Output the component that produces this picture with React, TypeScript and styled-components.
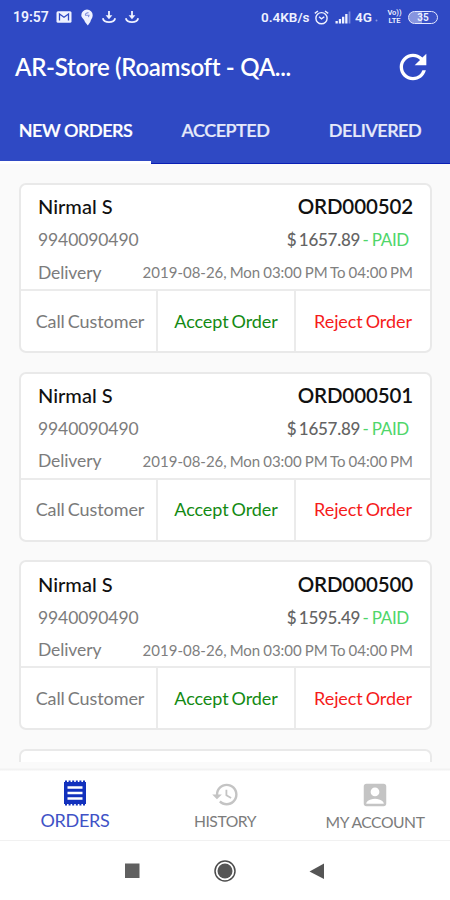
import React from "react";
import styled, { createGlobalStyle } from "styled-components";
import { MdRefresh, MdHistory, MdAccountBox } from "react-icons/md";

const GlobalStyle = createGlobalStyle`
  * { box-sizing: border-box; }
  body { margin: 0; background: #fff; }
  button { border: 0; padding: 0; background: none; font: inherit; color: inherit; }
`;

const Screen = styled.div`
  width: 450px;
  height: 900px;
  display: flex;
  flex-direction: column;
  overflow: hidden;
  background: #fff;
  font-family: Lato, sans-serif;
  white-space: nowrap;
`;

const Header = styled.header`
  height: 164px;
  flex: none;
  background: #2f49c4;
  color: #fff;
  display: flex;
  flex-direction: column;
  border-bottom: 1px solid #0a1fb4;
`;

const StatusBar = styled.div`
  height: 34px;
  display: flex;
  align-items: center;
  justify-content: space-between;
  padding: 0 12px 0 13px;
  color: #eef1ff;
  font-family: Roboto, sans-serif;
  font-weight: 600;
`;

const StatusGroup = styled.div`
  display: flex;
  align-items: center;
`;

const StatusText = styled.span<{ $size: number; $width: number }>`
  font-size: ${(p) => p.$size}px;
  width: ${(p) => p.$width}px;
  line-height: 16px;
`;

const StatusIcon = styled.svg<{ $gap: number }>`
  display: block;
  flex: none;
  margin-left: ${(p) => p.$gap}px;
`;

const Lte = styled.span`
  display: flex;
  flex-direction: column;
  align-items: center;
  width: 15px;
  margin-left: 9px;
  font-size: 7.5px;
  line-height: 8px;
`;

const Battery = styled.span`
  width: 30px;
  height: 13px;
  margin-left: 6px;
  border: 1.5px solid #e4e8ff;
  border-radius: 7px;
  background: linear-gradient(90deg, #8795df 45%, #3a52c8 45%);
  font-size: 10px;
  line-height: 11px;
  text-align: center;
`;

const TitleBar = styled.div`
  height: 66px;
  display: flex;
  align-items: center;
  justify-content: space-between;
  padding: 0 17px 0 15px;
`;

const Title = styled.h1`
  margin: 0;
  font-size: 24px;
  line-height: 30px;
  font-weight: 600;
  letter-spacing: -0.3px;
`;

const Tabs = styled.nav`
  display: grid;
  grid-template-columns: 151px 149px 150px;
  flex: 1;
`;

const Tab = styled.button<{ $active?: boolean }>`
  padding-bottom: ${(p) => (p.$active ? 2 : 3)}px;
  border-bottom: ${(p) => (p.$active ? "3px solid #fff" : "0")};
  margin-bottom: ${(p) => (p.$active ? -1 : 0)}px;
  color: ${(p) => (p.$active ? "#fff" : "#e6e9fa")};
  font-size: 18px;
  font-weight: 600;
  letter-spacing: -0.5px;
  -webkit-text-stroke: 0.2px currentColor;
`;

const OrderList = styled.main`
  height: 598px;
  flex: none;
  overflow: hidden;
  padding: 19px 18px 0 19px;
  background: #fafafa;
  display: flex;
  flex-direction: column;
  gap: 18.7px;
`;

const Card = styled.article`
  height: 170px;
  flex: none;
  border: 2px solid #e9e9e9;
  border-radius: 7px;
  background: #fff;
  display: flex;
  flex-direction: column;
`;

const Details = styled.div`
  height: 106px;
  flex: none;
  padding: 4.7px 17px 0 17px;
  border-bottom: 2px solid #ebebeb;
`;

const Row = styled.div<{ $height: number }>`
  height: ${(p) => p.$height}px;
  display: flex;
  align-items: center;
  justify-content: space-between;
`;

const Customer = styled.span`
  color: #111;
  font-size: 20px;
  font-weight: 500;
`;

const OrderId = styled.span`
  color: #111;
  font-size: 20.5px;
  font-weight: 600;
  letter-spacing: -0.12px;
`;

const Muted = styled.span`
  color: #7c7c7c;
  font-size: 17.5px;
  letter-spacing: -0.1px;
`;

const Amount = styled.span`
  color: #646464;
  font-size: 17px;
  font-weight: 500;
  margin-right: 4px;
  letter-spacing: -0.28px;
  word-spacing: -1.5px;
`;

const Paid = styled.span`
  color: #4fd66a;
  font-weight: 400;
  letter-spacing: -0.3px;
  word-spacing: -1px;
`;

const Slot = styled.span`
  color: #808080;
  font-size: 15px;
  word-spacing: -0.9px;
`;

const Actions = styled.div`
  flex: 1;
  display: grid;
  grid-template-columns: 137px 138px 1fr;
`;

const Action = styled.button<{ $color: string }>`
  color: ${(p) => p.$color};
  font-size: 18px;
  letter-spacing: -0.08px;
  word-spacing: -1.5px;
  padding-bottom: 1px;
  border-right: 2px solid #ebebeb;
  &:first-child { padding-left: 3px; }
  &:last-child { border-right: 0; }
`;

const BottomNav = styled.nav`
  height: 79px;
  flex: none;
  display: grid;
  grid-template-columns: repeat(3, 1fr);
  border-bottom: 1px solid #f1f1f1;
  padding-top: 7px;
  background: linear-gradient(#fafafa 0 6px, #f2f2f2 7px 8px, #fff 9px);
`;

const NavItem = styled.button<{ $active?: boolean }>`
  display: flex;
  flex-direction: column;
  align-items: center;
  padding-top: ${(p) => (p.$active ? 9 : 11)}px;
  gap: 1px;
  color: ${(p) => (p.$active ? "#4052c6" : "#7c7c7c")};
  font-size: ${(p) => (p.$active ? 18 : 15.7)}px;
  letter-spacing: ${(p) => (p.$active ? -0.3 : -0.45)}px;
  line-height: 23px;
  svg { color: ${(p) => (p.$active ? "#1231bd" : "#c4c4c4")}; }
`;

const SystemNav = styled.footer`
  flex: 1;
  display: flex;
  justify-content: center;
  align-items: center;
  gap: 71px;
`;

const Download = ({ gap }: { gap: number }) => (
  <StatusIcon $gap={gap} width="14" height="14" viewBox="0 0 14 14" fill="none" stroke="currentColor" strokeWidth="1.8">
    <path d="M7 1v6M0.8 8.2C2.2 13.4 11.8 13.4 13.2 8.2" />
    <path d="M3.6 5.3h6.8L7 9.3z" fill="currentColor" stroke="none" />
  </StatusIcon>
);

const ReceiptIcon = () => (
  <svg width="30" height="30" viewBox="0 0 30 30">
    <path d="M4 4h22v22H4z" fill="currentColor" />
    <path d="M5 3.5h20M5 26.5h20" stroke="currentColor" strokeWidth="2" strokeDasharray="2 1.6" />
    <path d="M7.5 9.5h15M7.5 15h15M7.5 20.5h15" stroke="#fff" strokeWidth="2.6" />
  </svg>
);

const orders = [
  { id: "ORD000502", amount: "$ 1657.89" },
  { id: "ORD000501", amount: "$ 1657.89" },
  { id: "ORD000500", amount: "$ 1595.49" },
];

const OrderCard = ({ id, amount }: { id: string; amount: string }) => (
  <Card>
    <Details>
      <Row $height={33}>
        <Customer>Nirmal S</Customer>
        <OrderId>{id}</OrderId>
      </Row>
      <Row $height={34}>
        <Muted>9940090490</Muted>
        <Amount>{amount} <Paid>- PAID</Paid></Amount>
      </Row>
      <Row $height={31}>
        <Muted>Delivery</Muted>
        <Slot>2019-08-26, Mon 03:00 PM To 04:00 PM</Slot>
      </Row>
    </Details>
    <Actions>
      <Action $color="#7a7a7a">Call Customer</Action>
      <Action $color="#138a13">Accept Order</Action>
      <Action $color="#f51b1b">Reject Order</Action>
    </Actions>
  </Card>
);

export default function App() {
  return (
    <Screen>
      <GlobalStyle />
      <Header>
        <StatusBar>
          <StatusGroup>
            <StatusText $size={14} $width={36}>19:57</StatusText>
            <StatusIcon $gap={7} width="16" height="12" viewBox="0 0 16 12">
              <rect x="0.5" y="0.3" width="15" height="11.4" rx="1.5" fill="currentColor" />
              <path d="M3.5 9.5V3L8 6.3 12.5 3v6.5" fill="none" stroke="#2f49c4" strokeWidth="1.3" />
            </StatusIcon>
            <StatusIcon $gap={9} width="12" height="17" viewBox="0 0 12 17">
              <path d="M6 0.5a5.7 5.7 0 0 1 5.7 5.7c0 3-1.9 4.1-2.4 6.8L6.8 16.5 4 13C3.3 10 0.3 9 0.3 6.2A5.7 5.7 0 0 1 6 0.5z" fill="currentColor" />
              <path d="M7.5 3.6C5 4 4 5 4.5 6.3H8L7.4 8.2" fill="none" stroke="#7f8edc" strokeWidth="1.1" />
            </StatusIcon>
            <Download gap={9} />
            <Download gap={9} />
          </StatusGroup>
          <StatusGroup>
            <StatusText $size={13.5} $width={48}>0.4KB/s</StatusText>
            <StatusIcon $gap={5} width="15" height="15" viewBox="0 0 15 15" fill="none" stroke="currentColor" strokeWidth="1.4">
              <circle cx="7.5" cy="8.2" r="5.6" />
              <path d="M0.8 3.4L4 1M14.2 3.4L11 1M5 6.8l2.5 2 2.8-2" />
            </StatusIcon>
            <StatusIcon $gap={6} width="16" height="13" viewBox="0 0 16 13" fill="currentColor">
              <path d="M0.5 10h2.3v2.5h-2.3zM3.8 8h2.3v4.5h-2.3zM7 5.8h2.3v6.7H7zM10.2 3h2.3v9.5h-2.3z" />
              <path d="M13.6 0.5h1.8v12h-1.8z" opacity="0.4" />
            </StatusIcon>
            <StatusIcon $gap={4} width="23" height="14" viewBox="0 0 23 14">
              <text x="0" y="12" fontFamily="Roboto" fontWeight="600" fontSize="13.5" fill="currentColor">4G</text>
              <circle cx="21.5" cy="10.5" r="1" fill="#8795df" />
            </StatusIcon>
            <Lte><span>Vo))</span><span>LTE</span></Lte>
            <Battery>35</Battery>
          </StatusGroup>
        </StatusBar>
        <TitleBar>
          <Title>AR-Store (Roamsoft - QA...</Title>
          <MdRefresh size={40} />
        </TitleBar>
        <Tabs>
          <Tab $active>NEW ORDERS</Tab>
          <Tab>ACCEPTED</Tab>
          <Tab>DELIVERED</Tab>
        </Tabs>
      </Header>
      <OrderList>
        {orders.map((o) => <OrderCard key={o.id} {...o} />)}
        <Card />
      </OrderList>
      <BottomNav>
        <NavItem $active><ReceiptIcon />ORDERS</NavItem>
        <NavItem><MdHistory size={29} />HISTORY</NavItem>
        <NavItem><MdAccountBox size={30} />MY ACCOUNT</NavItem>
      </BottomNav>
      <SystemNav>
        <svg width="18" height="22" viewBox="0 0 18 22"><rect x="1" y="3.5" width="14.5" height="14.5" fill="#606060" /></svg>
        <svg width="24" height="24" viewBox="0 0 24 24">
          <circle cx="12" cy="12" r="10" fill="none" stroke="#4c4c4c" strokeWidth="1.5" />
          <circle cx="12" cy="12" r="7.5" fill="#555" />
        </svg>
        <svg width="18" height="22" viewBox="0 0 18 22"><path d="M1.5 11.5L16 3.5V19z" fill="#555" /></svg>
      </SystemNav>
    </Screen>
  );
}
